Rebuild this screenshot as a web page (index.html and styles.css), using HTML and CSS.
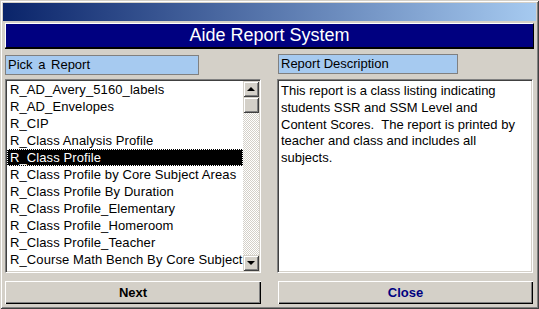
FILE: index.html
```html
<!DOCTYPE html>
<html>
<head>
  <link rel="stylesheet" href="styles.css">
</head>
<body>
  <div class="window">
    <div class="titlebar"></div>
    <div class="banner">Aide Report System</div>

    <div class="panes">
      <div class="pane">
        <div class="caption">Pick a Report</div>
        <div class="listbox">
          <ul class="items">
            <li>R_AD_Avery_5160_labels</li>
            <li>R_AD_Envelopes</li>
            <li>R_CIP</li>
            <li>R_Class Analysis Profile</li>
            <li class="selected">R_Class Profile</li>
            <li>R_Class Profile by Core Subject Areas</li>
            <li>R_Class Profile By Duration</li>
            <li>R_Class Profile_Elementary</li>
            <li>R_Class Profile_Homeroom</li>
            <li>R_Class Profile_Teacher</li>
            <li>R_Course Math Bench By Core Subject</li>
          </ul>
          <div class="scrollbar">
            <div class="sb-btn"><span class="arrow up"></span></div>
            <div class="sb-thumb"></div>
            <div class="sb-track"></div>
            <div class="sb-btn"><span class="arrow down"></span></div>
          </div>
        </div>
        <button type="button" class="btn">Next</button>
      </div>

      <div class="pane">
        <div class="caption caption-desc">Report Description</div>
        <div class="desc">This report is a class listing indicating<br>students SSR and SSM Level and<br>Content Scores.&nbsp; The report is printed by<br>teacher and class and includes all<br>subjects.</div>
        <button type="button" class="btn btn-close">Close</button>
      </div>
    </div>
  </div>
</body>
</html>
```

FILE: styles.css
```css
body {
  margin: 0;
  background-color: #d4d0c8;
  font-family: "Liberation Sans", Arial, sans-serif;
}

.window {
  width: 539px;
  height: 309px;
  box-sizing: border-box;
  padding: 3px;
  background-color: #d4d0c8;
  box-shadow: inset 1px 1px 0 #d4d0c8, inset -1px -1px 0 #404040,
              inset 2px 2px 0 #fff, inset -2px -2px 0 #808080;
}

.titlebar {
  height: 18px;
  background: linear-gradient(to right, #0a246a, #a6caf0);
}

.banner {
  margin: 2px 2px 0 2px;
  height: 25px;
  box-sizing: border-box;
  background-color: #000080;
  color: #fff;
  font-size: 18px;
  line-height: 23px;
  text-align: center;
  border-top: 1px solid #fff;
  border-left: 1px solid #fff;
  border-bottom: 1px solid #000;
  border-right: 1px solid #000;
  box-shadow: 0 1px 0 #000;
}

.panes {
  display: grid;
  grid-template-columns: 256px 256px;
  column-gap: 16px;
  margin: 7px 0 0 2px;
}

.pane {
  display: flex;
  flex-direction: column;
  align-items: flex-start;
}

.caption {
  width: 194px;
  height: 20px;
  box-sizing: border-box;
  border: 1px solid #808080;
  background-color: #a6caf0;
  font-size: 13px;
  line-height: 18px;
  padding-left: 2px;
  word-spacing: 2px;
}

.caption-desc {
  width: 180px;
  margin-left: 1px;
  margin-top: -1px;
  margin-bottom: 1px;
  word-spacing: 0;
}

.listbox, .desc {
  margin-top: 4px;
  width: 256px;
  height: 194px;
  box-sizing: border-box;
  background-color: #fff;
  border-top: 1px solid #808080;
  border-left: 1px solid #808080;
  border-bottom: 1px solid #fff;
  border-right: 1px solid #fff;
  box-shadow: inset 1px 1px 0 #404040, inset -1px -1px 0 #d4d0c8;
  padding: 1px;
  font-size: 13px;
}

.listbox {
  display: flex;
  overflow: hidden;
}

.items {
  list-style: none;
  margin: 0;
  padding: 0;
  flex: 1;
  overflow: hidden;
}

.items li {
  height: 17px;
  line-height: 17px;
  padding-left: 3px;
  white-space: nowrap;
  letter-spacing: 0.1px;
}

.items li.selected {
  background-color: #000;
  color: #fff;
  outline: 1px dotted #fff;
  outline-offset: -1px;
}

.scrollbar {
  width: 16px;
  display: flex;
  flex-direction: column;
}

.sb-btn, .sb-thumb {
  height: 16px;
  box-sizing: border-box;
  background-color: #d4d0c8;
  box-shadow: inset 1px 1px 0 #d4d0c8, inset -1px -1px 0 #404040,
              inset 2px 2px 0 #fff, inset -2px -2px 0 #808080;
  display: flex;
  align-items: center;
  justify-content: center;
}

.sb-track {
  flex: 1;
  background: repeating-conic-gradient(#fff 0 25%, #d4d0c8 0 50%);
  background-size: 2px 2px;
}

.arrow {
  width: 0;
  height: 0;
  border-left: 4px solid transparent;
  border-right: 4px solid transparent;
}

.arrow.up {
  border-bottom: 4px solid #000;
}

.arrow.down {
  border-top: 4px solid #000;
}

.desc {
  padding: 3px 3px;
  line-height: 16.75px;
  white-space: nowrap;
}

.btn {
  margin-top: 8px;
  width: 256px;
  height: 23px;
  background-color: #d4d0c8;
  border: none;
  padding: 0;
  box-shadow: inset 1px 1px 0 #fff, inset -1px -1px 0 #000,
              inset -2px -2px 0 #808080;
  font-family: "Liberation Sans", Arial, sans-serif;
  font-size: 13px;
  font-weight: bold;
  color: #000;
}

.btn-close {
  color: #000080;
  margin-left: 1px;
  width: 255px;
}
```
